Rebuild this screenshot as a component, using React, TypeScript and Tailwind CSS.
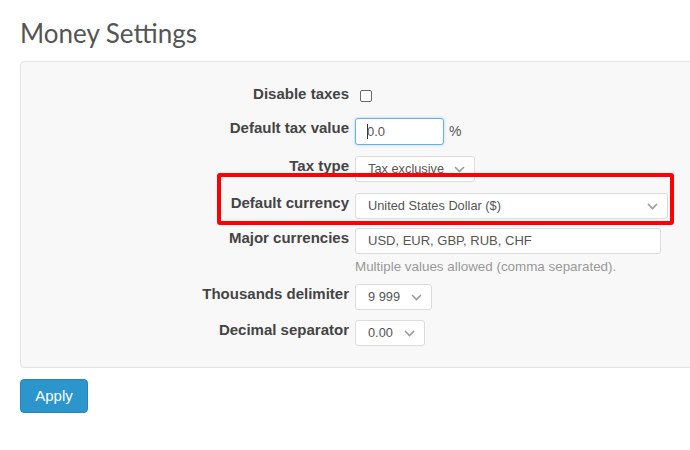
const Chevron = () => (
  <svg width="11" height="7" viewBox="0 0 11 7" className="shrink-0">
    <polyline points="1,1 5.5,5.5 10,1" fill="none" stroke="#9a9a9a" strokeWidth="1.6" />
  </svg>
);

const Select = ({ value, width }: { value: string; width: string }) => (
  <div
    className={`${width} h-[26px] flex items-center justify-between pl-[12px] pr-[9px] bg-white border border-[#dcdcdc] rounded-[3px] text-[12.8px] text-[#555]`}
  >
    <span>{value}</span>
    <Chevron />
  </div>
);

const Row = ({ label, children }: { label: string; children: React.ReactNode }) => (
  <div className="flex items-start">
    <div className="w-[334px] shrink-0 text-right pr-[6px] font-bold text-[15px] leading-[20px] text-[#444]">{label}</div>
    <div className="flex-1">{children}</div>
  </div>
);

const App = () => {
  return (
    <div
      className="relative w-[690px] h-[450px] overflow-hidden bg-white"
      style={{ fontFamily: '"Liberation Sans", Arial, sans-serif' }}
    >
      {/* Title */}
      <div className="h-[61px] pt-[18px] pl-[20px]">
        <h1 className="text-[26px] leading-[31px] text-[#555]" style={{ fontFamily: 'Lato, sans-serif' }}>
          Money Settings
        </h1>
      </div>

      {/* Settings panel */}
      <div className="ml-[20px] w-[720px] h-[307px] pt-[22px] bg-[#f8f8f8] border border-[#e3e3e3] rounded-[4px] flex flex-col">
        <Row label="Disable taxes">
          <div className="mt-[6px] ml-[5px] w-[12px] h-[12px] border border-[#6b6b6b] rounded-[2px] bg-white" />
        </Row>

        <div className="mt-[14px]">
          <Row label="Default tax value">
            <div className="flex items-center">
              <div className="w-[89px] h-[27px] flex items-center pl-[11px] bg-white border border-[#66afe9] rounded-[3px] shadow-[0_0_3px_rgba(102,175,233,0.5)] text-[13px] text-[#555]">
                <span className="w-px h-[15px] bg-[#333] mr-[-1px]" />
                <span>0.0</span>
              </div>
              <span className="ml-[5px] text-[14px] text-[#555]">%</span>
            </div>
          </Row>
        </div>

        <div className="mt-[11px]">
          <Row label="Tax type">
            <Select value="Tax exclusive" width="w-[120px]" />
          </Row>
        </div>

        <div className="mt-[11px]">
          <Row label="Default currency">
            <Select value="United States Dollar ($)" width="w-[313px]" />
          </Row>
        </div>

        <div className="mt-[9px]">
          <Row label="Major currencies">
            <div className="w-[306px] h-[26px] flex items-center pl-[12px] bg-white border border-[#dcdcdc] rounded-[3px] text-[13px] text-[#555]">
              USD, EUR, GBP, RUB, CHF
            </div>
            <div className="mt-[5px] text-[13.4px] leading-[16px] text-[#999]">Multiple values allowed (comma separated).</div>
          </Row>
        </div>

        <div className="mt-[9px]">
          <Row label="Thousands delimiter">
            <Select value="9 999" width="w-[77px]" />
          </Row>
        </div>

        <div className="mt-[10px]">
          <Row label="Decimal separator">
            <Select value="0.00" width="w-[70px]" />
          </Row>
        </div>
      </div>

      <div className="pl-[20px] pt-[11px]">
        <button className="w-[68px] h-[34px] rounded-[4px] bg-[#2b95cc] border border-[#2785b8] text-white text-[15px]">
          Apply
        </button>
      </div>

      {/* Highlight annotation */}
      <div className="absolute left-[217px] top-[173px] w-[457px] h-[52px] border-[4px] border-[#ff0000] rounded-[3px]" />
    </div>
  );
};

export default App;
